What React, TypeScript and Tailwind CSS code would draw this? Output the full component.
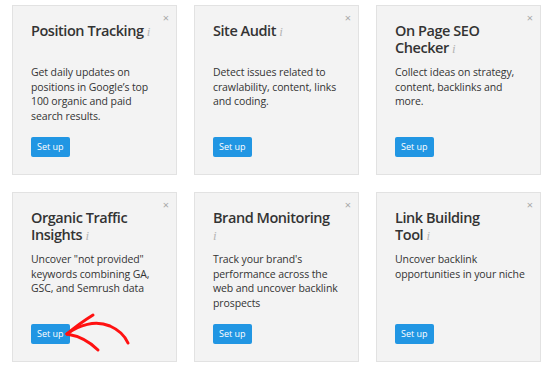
import React from "react";

interface Tool {
  title: string;
  desc: string;
}

const tools: Tool[] = [
  {
    title: "Position Tracking",
    desc: "Get daily updates on positions in Google’s top 100 organic and paid search results.",
  },
  {
    title: "Site Audit",
    desc: "Detect issues related to crawlability, content, links and coding.",
  },
  {
    title: "On Page SEO\nChecker",
    desc: "Collect ideas on strategy, content, backlinks and more.",
  },
  {
    title: "Organic Traffic\nInsights",
    desc: "Uncover \"not provided\" keywords combining GA, GSC, and Semrush data",
  },
  {
    title: "Brand Monitoring",
    desc: "Track your brand's performance across the web and uncover backlink prospects",
  },
  {
    title: "Link Building\nTool",
    desc: "Uncover backlink opportunities in your niche",
  },
];

function ToolCard({ tool, arrow }: { tool: Tool; arrow?: boolean }) {
  return (
    <div className="relative flex h-[170px] flex-col border border-[#e2e2e2] bg-[#f3f3f3] pl-[18px] pr-[14px] pt-[16px] pb-[17px]">
      {/* close */}
      <span className="absolute right-[7px] top-[6px] text-[11px] leading-none text-[#a8a8a8]">
        ×
      </span>

      <div className="h-[34px] w-[122px] whitespace-pre-line text-[14.5px] font-semibold leading-[17px] tracking-[-0.45px] text-[#333]">
        {tool.title}{" "}
        <span className="font-['Liberation_Serif',serif] text-[13px] font-normal italic tracking-normal text-[#b5b5b5]">
          i
        </span>
      </div>

      <p className="mt-[9px] text-[10.5px] leading-[14.6px] tracking-[-0.1px] text-[#333]">{tool.desc}</p>

      <div className="mt-auto">
        <button className="h-[20px] rounded-[2px] bg-[#2196e3] px-[6px] text-[9px] leading-[20px] text-white">
          Set up
        </button>
      </div>

      {arrow && (
        <svg
          className="pointer-events-none absolute left-0 top-0"
          width="165"
          height="170"
          viewBox="0 0 165 170"
          fill="none"
          stroke="#ff1111"
          strokeWidth="3"
          strokeLinecap="round"
        >
          {/* hand-drawn arrow, coords relative to the card */}
          <path d="M54 141 C 66 132, 82 127, 97 133 C 106 137, 112 143, 115 150" />
          <path d="M54 141 C 62 134, 72 127, 80 122" />
          <path d="M54 141 C 66 143, 77 149, 85 157" />
        </svg>
      )}
    </div>
  );
}

export default function App() {
  return (
    <div className="min-h-screen bg-white font-['Open_Sans',sans-serif]">
      <div className="grid grid-cols-[165px_165px_165px] gap-x-[17px] gap-y-[17px] pl-[12px] pt-[5px]">
        {tools.map((t, i) => (
          <ToolCard key={t.title} tool={t} arrow={i === 3} />
        ))}
      </div>
    </div>
  );
}
